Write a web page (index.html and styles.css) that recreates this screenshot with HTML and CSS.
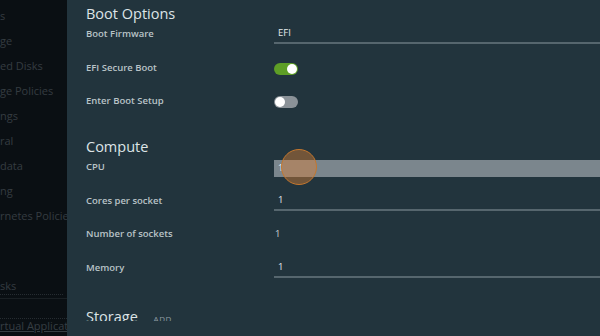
FILE: index.html
```html
<!DOCTYPE html>
<html lang="en">
<head>
    <meta charset="UTF-8">
    <meta name="viewport" content="width=device-width, initial-scale=1.0">
    <title>VM Settings</title>
    <link rel="stylesheet" href="styles.css">
</head>
<body>
    <!-- Sidebar, scrolled out of view on the left -->
    <div class="sidebar">
        <ul class="nav-items">
            <li>s</li>
            <li>ge</li>
            <li>ed Disks</li>
            <li>ge Policies</li>
            <li>ngs</li>
            <li>ral</li>
            <li>data</li>
            <li>ng</li>
            <li>rnetes Policies</li>
        </ul>
        <div class="nav-tasks">sks</div>
        <div class="nav-rule"></div>
        <a class="nav-link" href="#">rtual Application</a>
    </div>

    <div class="main">
        <div class="content">
            <!-- Boot options -->
            <h2 class="section-title">Boot Options</h2>
            <div class="form-row">
                <div class="label">Boot Firmware</div>
                <div class="input">EFI</div>
            </div>
            <div class="form-row">
                <div class="label">EFI Secure Boot</div>
                <div class="toggle on"><span class="knob"></span></div>
            </div>
            <div class="form-row">
                <div class="label">Enter Boot Setup</div>
                <div class="toggle"><span class="knob"></span></div>
            </div>

            <!-- Compute -->
            <h2 class="section-title compute">Compute</h2>
            <div class="form-row">
                <div class="label">CPU</div>
                <div class="input active">1<span class="click-dot"></span></div>
            </div>
            <div class="form-row">
                <div class="label">Cores per socket</div>
                <div class="input">1</div>
            </div>
            <div class="form-row">
                <div class="label">Number of sockets</div>
                <div class="value">1</div>
            </div>
            <div class="form-row">
                <div class="label">Memory</div>
                <div class="input">1</div>
            </div>

            <!-- Storage -->
            <h2 class="section-title storage">Storage <span class="add-link">ADD</span></h2>
        </div>
        <div class="footer"></div>
    </div>
</body>
</html>
```

FILE: styles.css
```css
* {
    margin: 0;
    padding: 0;
    box-sizing: border-box;
    font-family: 'Open Sans', 'Liberation Sans', sans-serif;
}

body {
    display: flex;
    height: 100vh;
    overflow: hidden;
    background-color: #0b1014;
}

/* Sidebar */
.sidebar {
    width: 67px;
    flex-shrink: 0;
    background-color: #0a0f13;
    overflow: hidden;
    white-space: nowrap;
    display: flex;
    flex-direction: column;
}

.nav-items {
    list-style: none;
    padding-top: 3px;
}

.nav-items li {
    height: 25px;
    line-height: 25px;
    font-size: 11px;
    color: #353c41;
}

.nav-tasks {
    margin-top: 49px;
    margin-right: 4px;
    height: 18px;
    line-height: 18px;
    font-size: 11px;
    color: #353c41;
    border-bottom: 1px dotted #262c31;
}

.nav-rule {
    height: 1px;
    margin-top: 3px;
    background-color: #1a2024;
}

.nav-link {
    margin-top: 19px;
    font-size: 11px;
    line-height: 14px;
    color: #363e43;
    text-decoration: underline;
    border-top: 1px dotted #262c31;
}

/* Main panel */
.main {
    flex: 1;
    display: flex;
    flex-direction: column;
    background-color: #22343d;
    overflow: hidden;
}

.content {
    flex: 1;
    overflow: hidden;
    padding: 4px 0 0 19px;
}

.footer {
    height: 15px;
    flex-shrink: 0;
}

.section-title {
    font-size: 14.5px;
    font-weight: 400;
    line-height: 20px;
    color: #dde4e7;
    white-space: nowrap;
}

.section-title.compute {
    margin-top: 12.5px;
}

.section-title.storage {
    margin-top: 16px;
}

.add-link {
    font-size: 8px;
    letter-spacing: 0.5px;
    color: #8e9ca2;
    margin-left: 12px;
}

.form-row {
    display: grid;
    grid-template-columns: 188px 1fr;
    align-items: start;
    height: 33.5px;
}

.label {
    font-size: 9.5px;
    font-weight: 600;
    line-height: 20px;
    color: #b9c3c7;
}

.input {
    position: relative;
    height: 20px;
    line-height: 18px;
    padding-left: 4px;
    font-size: 9.5px;
    color: #e4eaec;
    border-bottom: 2px solid #56666e;
}

.input.active {
    margin-top: 3px;
    height: 17px;
    line-height: 15px;
    background-color: #7b868d;
    border-bottom: 2px solid #7b868d;
    color: #eef2f3;
}

.value {
    line-height: 20px;
    padding-left: 1px;
    font-size: 9.5px;
    color: #c9d2d5;
}

/* Click indicator over the CPU field */
.click-dot {
    position: absolute;
    left: 7px;
    top: -11px;
    width: 36px;
    height: 36px;
    border-radius: 50%;
    background-color: rgba(226, 132, 52, 0.42);
    border: 1.5px solid #c4772e;
}

/* Toggle switches */
.toggle {
    position: relative;
    margin-top: 5px;
    width: 24px;
    height: 12px;
    border-radius: 6px;
    background-color: #8b9298;
}

.toggle .knob {
    position: absolute;
    top: 1px;
    left: 1px;
    width: 10px;
    height: 10px;
    border-radius: 50%;
    background-color: #fff;
}

.toggle.on {
    background-color: #5e9e26;
}

.toggle.on .knob {
    left: 13px;
}
```
